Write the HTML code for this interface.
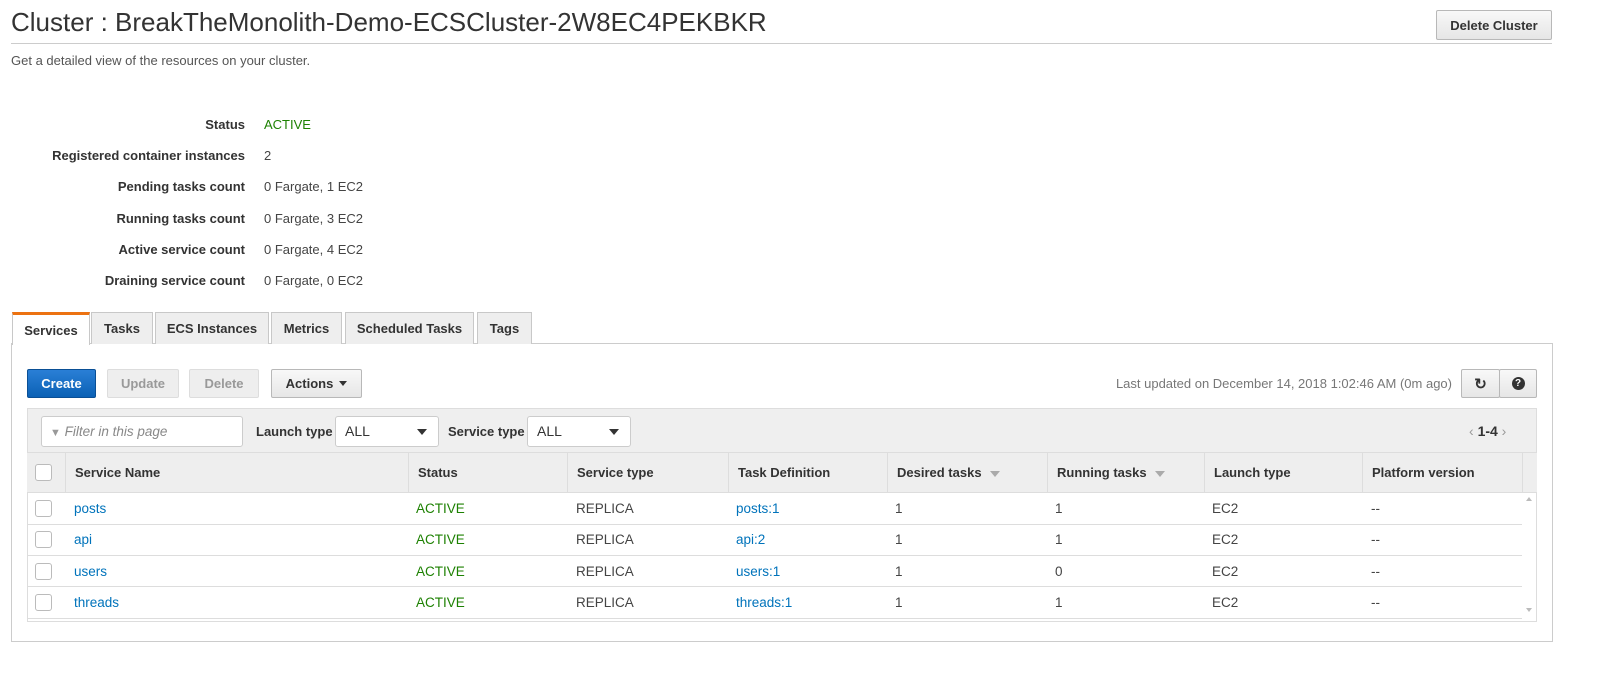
<!DOCTYPE html>
<html><head><meta charset="utf-8"><style>
*{box-sizing:border-box;margin:0;padding:0}
body{width:1602px;height:674px;background:#fff;font-family:"Liberation Sans",Arial,sans-serif;color:#444;position:relative;overflow:hidden;font-size:13px}
.a{position:absolute;white-space:nowrap}
.btn{position:absolute;border:1px solid #b8b8b8;border-radius:2px;background:linear-gradient(#f8f8f8,#e6e6e6);font-weight:bold;font-size:13px;color:#333;display:flex;align-items:center;justify-content:center}
.lbl{position:absolute;right:1357px;font-weight:bold;color:#333}
.val{position:absolute;left:264px;color:#444}
.tab{position:absolute;top:312px;height:32px;border:1px solid #c8c8c8;border-bottom:none;background:#eee;font-weight:bold;color:#333;display:flex;align-items:center;justify-content:center}
.sel{position:absolute;top:416px;height:31px;border:1px solid #ccc;border-radius:3px;background:#fff;padding-left:9px;line-height:29px;font-size:14px;color:#333}
.sel:after{content:"";position:absolute;right:11px;top:12px;border-left:5px solid transparent;border-right:5px solid transparent;border-top:6px solid #333}
.th{position:absolute;top:453px;height:40px;line-height:40px;font-weight:bold;color:#333;border-left:1px solid #ddd;padding-left:9px}
.cb{position:absolute;left:35px;width:17px;height:17px;border:1px solid #bbb;border-radius:3px;background:#fff}
.row{position:absolute;left:27px;width:1495px;height:32px;border-bottom:1px solid #ddd}
.c{position:absolute;line-height:31px;font-size:13.5px}
.lk{color:#0073bb}.g{color:#1d8102}
.arr{display:inline-block;margin-left:8px;vertical-align:middle;border-left:5px solid transparent;border-right:5px solid transparent;border-top:6px solid #aaa}
</style></head><body>
<div class="a" style="left:11px;top:7px;font-size:26px;color:#333">Cluster : BreakTheMonolith-Demo-ECSCluster-2W8EC4PEKBKR</div>
<div class="a" style="left:11px;top:43px;width:1541px;height:1px;background:#ccc"></div>
<div class="btn" style="left:1436px;top:10px;width:116px;height:30px">Delete Cluster</div>
<div class="a" style="left:11px;top:53px;font-size:13px;color:#555">Get a detailed view of the resources on your cluster.</div>

<div class="lbl" style="top:117px">Status</div><div class="val g" style="top:117px">ACTIVE</div>
<div class="lbl" style="top:148px">Registered container instances</div><div class="val" style="top:148px">2</div>
<div class="lbl" style="top:179px">Pending tasks count</div><div class="val" style="top:179px">0 Fargate, 1 EC2</div>
<div class="lbl" style="top:211px">Running tasks count</div><div class="val" style="top:211px">0 Fargate, 3 EC2</div>
<div class="lbl" style="top:242px">Active service count</div><div class="val" style="top:242px">0 Fargate, 4 EC2</div>
<div class="lbl" style="top:273px">Draining service count</div><div class="val" style="top:273px">0 Fargate, 0 EC2</div>

<div class="a" style="left:11px;top:343px;width:1542px;height:299px;border:1px solid #ccc;background:#fff"></div>
<div class="tab" style="left:12px;width:78px;background:#fff;border-top:3px solid #ec7211;height:33px">Services</div>
<div class="tab" style="left:91px;width:62px">Tasks</div>
<div class="tab" style="left:155px;width:114px">ECS Instances</div>
<div class="tab" style="left:271px;width:71px">Metrics</div>
<div class="tab" style="left:345px;width:129px">Scheduled Tasks</div>
<div class="tab" style="left:477px;width:55px">Tags</div>

<div class="btn" style="left:27px;top:369px;width:69px;height:29px;background:linear-gradient(#2a7fd6,#0b61b5);border-color:#0a4f95;color:#fff">Create</div>
<div class="btn" style="left:107px;top:369px;width:72px;height:29px;background:#eee;border-color:#ddd;color:#999">Update</div>
<div class="btn" style="left:189px;top:369px;width:70px;height:29px;background:#eee;border-color:#ddd;color:#999">Delete</div>
<div class="btn" style="left:271px;top:369px;width:91px;height:29px">Actions<span style="margin-left:6px;border-left:4px solid transparent;border-right:4px solid transparent;border-top:5px solid #333"></span></div>
<div class="a" style="right:150px;top:376px;font-size:13px;color:#777">Last updated on December 14, 2018 1:02:46 AM (0m ago)</div>
<div class="btn" style="left:1461px;top:369px;width:39px;height:29px;font-size:15px">&#x21bb;</div>
<div class="btn" style="left:1499px;top:369px;width:38px;height:29px"><span style="width:13px;height:13px;border-radius:50%;background:#333;color:#fff;font-size:10px;display:flex;align-items:center;justify-content:center">?</span></div>

<div class="a" style="left:27px;top:408px;width:1510px;height:214px;border:1px solid #ddd;background:#fff"></div>
<div class="a" style="left:27px;top:408px;width:1510px;height:45px;background:#efefef;border:1px solid #ddd"></div>
<div class="a" style="left:41px;top:416px;width:202px;height:31px;border:1px solid #ccc;border-radius:3px;background:#fff;padding-left:8px;line-height:29px;font-style:italic;color:#888;font-size:13.5px"><span style="font-style:normal;color:#999;font-size:11px">&#9660;</span> Filter in this page</div>
<div class="a" style="left:256px;top:424px;font-weight:bold;color:#333;font-size:13px">Launch type</div>
<div class="sel" style="left:335px;width:104px">ALL</div>
<div class="a" style="left:448px;top:424px;font-weight:bold;color:#333;font-size:13px">Service type</div>
<div class="sel" style="left:527px;width:104px">ALL</div>
<div class="a" style="left:1469px;top:423px;color:#999;font-size:14px">&#8249; <b style="color:#333">1-4</b> &#8250;</div>

<div class="a" style="left:27px;top:453px;width:1510px;height:40px;background:#eee;border-bottom:1px solid #ddd"></div>
<div class="cb" style="top:464px"></div>
<div class="th" style="left:65px">Service Name</div>
<div class="th" style="left:408px">Status</div>
<div class="th" style="left:567px">Service type</div>
<div class="th" style="left:728px">Task Definition</div>
<div class="th" style="left:887px">Desired tasks<span class="arr"></span></div>
<div class="th" style="left:1047px">Running tasks<span class="arr"></span></div>
<div class="th" style="left:1204px">Launch type</div>
<div class="th" style="left:1362px">Platform version</div>
<div class="th" style="left:1522px;width:15px;padding:0"></div>
<div class="a" style="left:1526px;top:497px;border-left:3px solid transparent;border-right:3px solid transparent;border-bottom:4px solid #bbb"></div>
<div class="a" style="left:1526px;top:608px;border-left:3px solid transparent;border-right:3px solid transparent;border-top:4px solid #bbb"></div>

<div class="row" style="top:493px"></div><div class="row" style="top:524px"></div><div class="row" style="top:555px"></div><div class="row" style="top:587px"></div>

<div class="cb" style="top:500px"></div><div class="cb" style="top:531px"></div><div class="cb" style="top:563px"></div><div class="cb" style="top:594px"></div>

<div class="c lk" style="left:74px;top:493px">posts</div><div class="c lk" style="left:74px;top:524px">api</div><div class="c lk" style="left:74px;top:556px">users</div><div class="c lk" style="left:74px;top:587px">threads</div>
<div class="c g" style="left:416px;top:493px">ACTIVE</div><div class="c g" style="left:416px;top:524px">ACTIVE</div><div class="c g" style="left:416px;top:556px">ACTIVE</div><div class="c g" style="left:416px;top:587px">ACTIVE</div>
<div class="c" style="left:576px;top:493px">REPLICA</div><div class="c" style="left:576px;top:524px">REPLICA</div><div class="c" style="left:576px;top:556px">REPLICA</div><div class="c" style="left:576px;top:587px">REPLICA</div>
<div class="c lk" style="left:736px;top:493px">posts:1</div><div class="c lk" style="left:736px;top:524px">api:2</div><div class="c lk" style="left:736px;top:556px">users:1</div><div class="c lk" style="left:736px;top:587px">threads:1</div>
<div class="c" style="left:895px;top:493px">1</div><div class="c" style="left:895px;top:524px">1</div><div class="c" style="left:895px;top:556px">1</div><div class="c" style="left:895px;top:587px">1</div>
<div class="c" style="left:1055px;top:493px">1</div><div class="c" style="left:1055px;top:524px">1</div><div class="c" style="left:1055px;top:556px">0</div><div class="c" style="left:1055px;top:587px">1</div>
<div class="c" style="left:1212px;top:493px">EC2</div><div class="c" style="left:1212px;top:524px">EC2</div><div class="c" style="left:1212px;top:556px">EC2</div><div class="c" style="left:1212px;top:587px">EC2</div>
<div class="c" style="left:1371px;top:493px">--</div><div class="c" style="left:1371px;top:524px">--</div><div class="c" style="left:1371px;top:556px">--</div><div class="c" style="left:1371px;top:587px">--</div>
</body></html>
